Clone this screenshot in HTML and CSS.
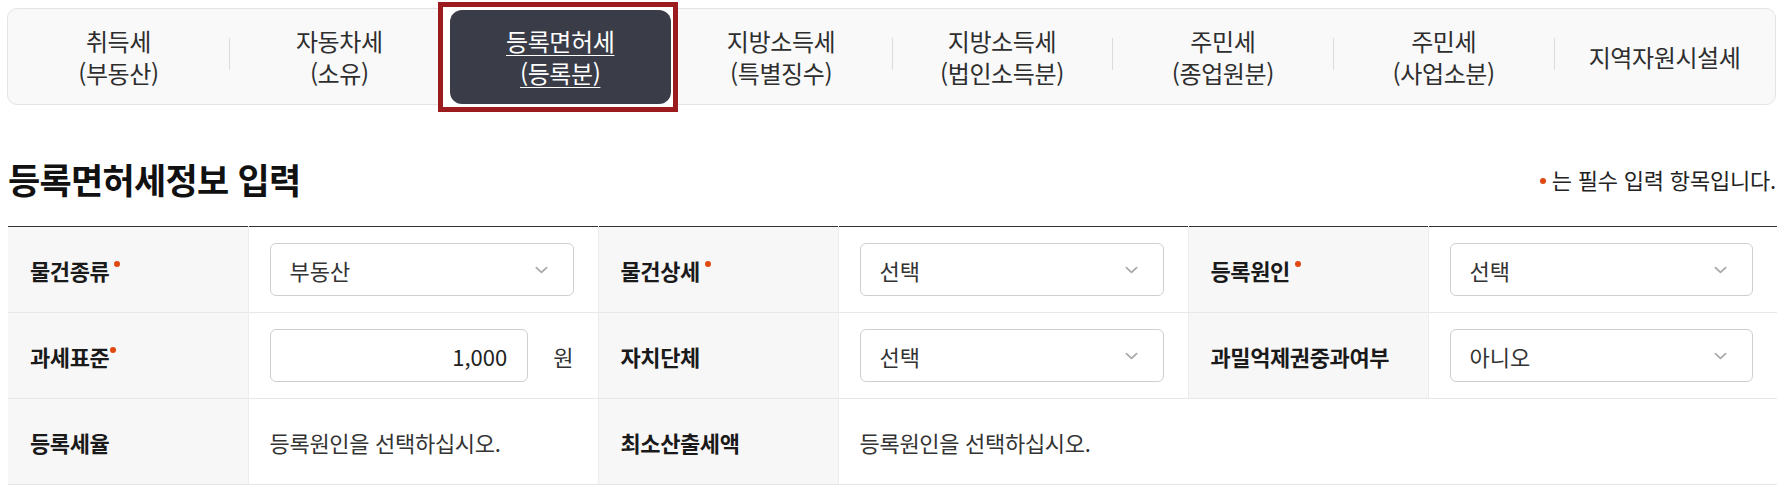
FILE: index.html
```html
<!DOCTYPE html>
<html lang="ko">
<head>
<meta charset="utf-8">
<link rel="stylesheet" href="styles.css">
</head>
<body>
<div class="page">
  <nav class="tabs">
    <a class="tab">취득세<br>(부동산)</a>
    <a class="tab">자동차세<br>(소유)</a>
    <a class="tab active">등록면허세<br>(등록분)</a>
    <a class="tab after-active">지방소득세<br>(특별징수)</a>
    <a class="tab">지방소득세<br>(법인소득분)</a>
    <a class="tab">주민세<br>(종업원분)</a>
    <a class="tab">주민세<br>(사업소분)</a>
    <a class="tab">지역자원시설세</a>
  </nav>

  <div class="head">
    <h2 class="title">등록면허세정보 입력</h2>
    <p class="note"><span class="dot"></span>는 필수 입력 항목입니다.</p>
  </div>

  <table class="form">
    <colgroup>
      <col class="c-label"><col class="c-value"><col class="c-label"><col class="c-value"><col class="c-label"><col>
    </colgroup>
    <tr>
      <th>물건종류<span class="dot"></span></th>
      <td><div class="select"><span>부동산</span><svg class="chev" viewBox="0 0 14 8" width="13" height="8"><path d="M1.5 1.5 L7 6.5 L12.5 1.5"/></svg></div></td>
      <th>물건상세<span class="dot"></span></th>
      <td><div class="select"><span>선택</span><svg class="chev" viewBox="0 0 14 8" width="13" height="8"><path d="M1.5 1.5 L7 6.5 L12.5 1.5"/></svg></div></td>
      <th>등록원인<span class="dot"></span></th>
      <td><div class="select"><span>선택</span><svg class="chev" viewBox="0 0 14 8" width="13" height="8"><path d="M1.5 1.5 L7 6.5 L12.5 1.5"/></svg></div></td>
    </tr>
    <tr>
      <th>과세표준<span class="dot tight"></span></th>
      <td><div class="amount"><div class="input">1,000</div><span class="unit">원</span></div></td>
      <th>자치단체</th>
      <td><div class="select"><span>선택</span><svg class="chev" viewBox="0 0 14 8" width="13" height="8"><path d="M1.5 1.5 L7 6.5 L12.5 1.5"/></svg></div></td>
      <th>과밀억제권중과여부</th>
      <td><div class="select"><span>아니오</span><svg class="chev" viewBox="0 0 14 8" width="13" height="8"><path d="M1.5 1.5 L7 6.5 L12.5 1.5"/></svg></div></td>
    </tr>
    <tr>
      <th>등록세율</th>
      <td class="text">등록원인을 선택하십시오.</td>
      <th>최소산출세액</th>
      <td class="text" colspan="3">등록원인을 선택하십시오.</td>
    </tr>
  </table>
</div>
</body>
</html>
```

FILE: styles.css
```css
* { box-sizing: border-box; }
html, body { margin: 0; padding: 0; background: #fff; }
body {
  font-family: "Noto Sans CJK KR", "Noto Sans", sans-serif;
  color: #222;
}
.page { padding: 0 6px 0 7px; }

/* tabs */
.tabs {
  position: relative;
  z-index: 0;
  margin-top: 8px;
  display: grid;
  grid-template-columns: repeat(8, 1fr);
  height: 97px;
  background: #f9f9fa;
  border: 1px solid #e4e4e6;
  border-radius: 10px;
}
.tab {
  position: relative;
  display: flex;
  align-items: center;
  justify-content: center;
  text-align: center;
  font-size: 24px;
  line-height: 32px;
  color: #2e2e2e;
  letter-spacing: -0.4px;
}
.tab::before {
  content: "";
  position: absolute;
  left: 0;
  top: 29px;
  width: 1px;
  height: 32px;
  background: #dcdcdc;
}
.tab:first-child::before,
.tab.active::before,
.tab.after-active::before { display: none; }

.tab.active {
  background: #3a3d48;
  color: #fff;
  text-decoration: underline;
  text-underline-offset: 4px;
  text-decoration-thickness: 1px;
  border-radius: 12px;
  margin: 1px 0 0 0;
}
.tab.active::after {
  content: "";
  position: absolute;
  z-index: -1;
  top: -8px;
  bottom: -8px;
  left: -12px;
  right: -7px;
  border: 5px solid #9c1b1e;
  background: #fff;
}

/* heading */
.head {
  display: flex;
  justify-content: space-between;
  align-items: center;
  height: 121px;
  padding-top: 26px;
  padding-left: 1px;
}
.title {
  margin: 0;
  font-size: 35px;
  font-weight: 700;
  letter-spacing: -0.7px;
  color: #111;
}
.note {
  margin: 0;
  font-size: 22px;
  color: #222;
  letter-spacing: -0.2px;
}
.note .dot { margin: 0 6px 0 0; vertical-align: 5px; }

.dot {
  display: inline-block;
  width: 6px;
  height: 6px;
  border-radius: 50%;
  background: #e0480f;
  margin-left: 5px;
  vertical-align: 13px;
}
.dot.tight { margin-left: 1px; }

/* form table */
.form {
  width: 100%;
  border-collapse: collapse;
  border-top: 1px solid #333;
  border-bottom: 1px solid #e6e6e6;
  margin-left: 1px;
}
.c-label { width: 240px; }
.c-value { width: 350px; }
.form tr { height: 86px; }
.form th, .form td {
  border-top: 1px solid #e8e8e8;
  border-left: 1px solid #ececec;
  vertical-align: middle;
  font-size: 22px;
}
.form tr:first-child th, .form tr:first-child td { border-top: 0; }
.form th:first-child { border-left: 0; }
.form th {
  background: #f7f7f7;
  text-align: left;
  font-weight: 700;
  color: #1a1a1a;
  padding: 0 8px 0 22px;
  letter-spacing: -0.4px;
  white-space: nowrap;
}
.form td {
  padding: 0 24px 0 21px;
  color: #333;
}
.form td.text { letter-spacing: -0.3px; }

.select {
  height: 53px;
  border: 1px solid #cfcfcf;
  border-radius: 6px;
  background: #fff;
  display: flex;
  align-items: center;
  justify-content: space-between;
  padding: 0 25px 0 19px;
  color: #333;
}
.chev {
  fill: none;
  stroke: #aaa;
  stroke-width: 2;
  stroke-linecap: round;
  stroke-linejoin: round;
}
.amount {
  display: flex;
  align-items: center;
  gap: 25px;
}
.input {
  flex: 1;
  height: 53px;
  border: 1px solid #cfcfcf;
  border-radius: 6px;
  display: flex;
  align-items: center;
  justify-content: flex-end;
  padding: 0 20px;
  color: #222;
}
.unit { color: #333; }
```
